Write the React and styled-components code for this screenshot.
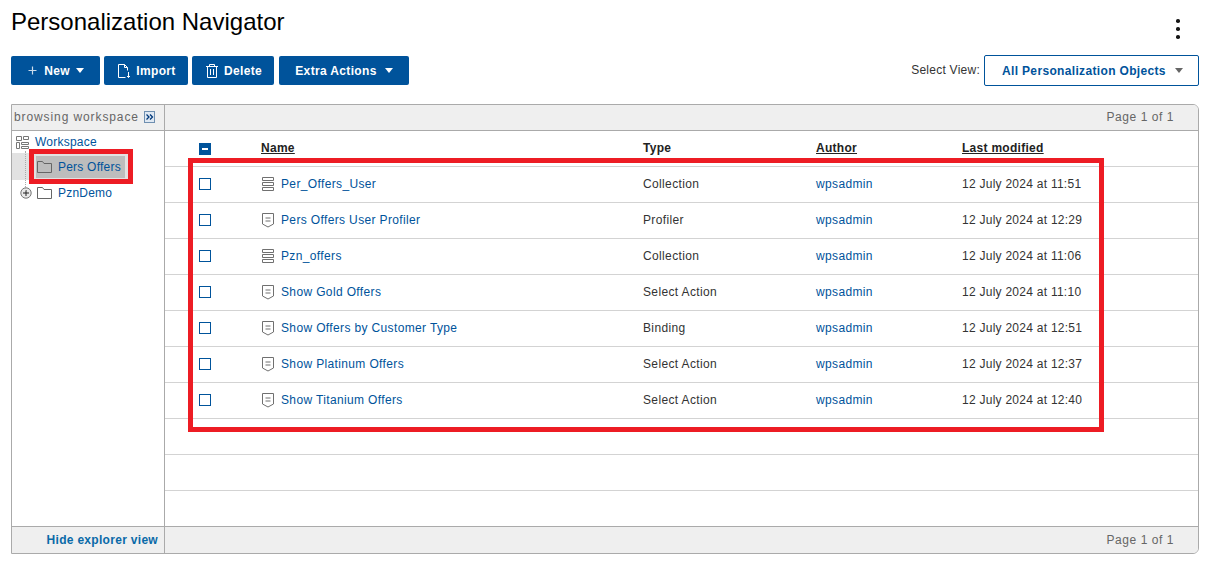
import React from "react";
import styled, { createGlobalStyle } from "styled-components";

const Global = createGlobalStyle`
  html, body { margin: 0; padding: 0; background: #fff; }
  body { font-family: "Liberation Sans", Arial, sans-serif; overflow: hidden; }
`

const Page = styled.div`
  position: relative;
  width: 1205px;
  height: 564px;
  box-sizing: border-box;
  padding: 0 6px 0 11px;
`

const TitleRow = styled.div`
  height: 56px;
  display: flex;
  justify-content: space-between;
`

const Title = styled.h1`
  margin: 7px 0 0;
  font-size: 24px;
  line-height: 29px;
  font-weight: 400;
  color: #000;
`

const Kebab = styled.div`
  margin: 19px 20px 0 0;
  width: 3px;
  display: flex;
  flex-direction: column;
  gap: 4.5px;
  >span{
    width: 3.5px;
    height: 3.5px;
    border-radius: 50%;
    background: #161616;
  }
`

const Toolbar = styled.div`
  height: 48px;
  display: flex;
  justify-content: space-between;
  align-items: flex-start;
`

const Buttons = styled.div`
  display: flex;
  gap: 4px;
`

const Button = styled.button`
  width: ${p => p.$w}px;
  height: 29px;
  margin-left: ${p => p.$ml || 0}px;
  padding: 0 0 0 ${p => p.$pl || 0}px;
  display: flex;
  align-items: center;
  justify-content: center;
  gap: ${p => p.$gap || 6}px;
  background: #00539b;
  color: #fff;
  border: none;
  border-radius: 2px;
  font: 700 12px "Liberation Sans", Arial, sans-serif;
  letter-spacing: 0.35px;
`

const Caret = styled.span`
  width: 0;
  height: 0;
  border-left: 4px solid transparent;
  border-right: 4px solid transparent;
  border-top: 5px solid ${p => p.$c || "#fff"};
`

const ViewPicker = styled.div`
  display: flex;
  align-items: center;
  gap: 4px;
  margin-top: -1px;
`

const ViewLabel = styled.span`
  font-size: 12px;
  letter-spacing: 0.25px;
  color: #333;
  margin-top: -2px;
`

const Select = styled.div`
  width: 215px;
  height: 31px;
  box-sizing: border-box;
  border: 1px solid #00539b;
  border-radius: 2px;
  padding: 0 15px 0 17px;
  display: flex;
  align-items: center;
  justify-content: space-between;
  font-size: 12px;
  font-weight: 700;
  letter-spacing: 0.34px;
  color: #00539b;
`

const Panel = styled.div`
  height: 450px;
  box-sizing: border-box;
  border: 1px solid #aaa;
  border-radius: 0 6px 6px 0;
  display: grid;
  grid-template-columns: 153px 1fr;
  grid-template-rows: 26px 1fr 27px;
  overflow: hidden;
`

const Bar = styled.div`
  background: #efefef;
  display: flex;
  align-items: center;
  font-size: 12px;
  letter-spacing: ${p => p.$left ? "0.9px" : "0.55px"};
  color: #666;
  border-right: ${p => p.$left ? "1px solid #aaa" : "none"};
  border-bottom: ${p => p.$top ? "1px solid #aaa" : "none"};
  border-top: ${p => p.$bottom ? "1px solid #aaa" : "none"};
  justify-content: ${p => p.$left ? "flex-start" : "flex-end"};
  padding: 0 ${p => p.$left ? "0" : "24px"} ${p => p.$top ? "2px" : "0"} ${p => p.$left ? "2px" : "0"};
`

const FootLink = styled.a`
  margin-left: auto;
  margin-right: 6px;
  font-weight: 700;
  letter-spacing: 0.3px;
  color: #0a6aa8;
`

const Tree = styled.div`
  border-right: 1px solid #aaa;
  position: relative;
`

const TreeRow = styled.div`
  height: ${p => p.$h}px;
  width: ${p => p.$w ? `${p.$w}px` : "auto"};
  box-sizing: border-box;
  display: flex;
  align-items: center;
  padding-left: ${p => p.$indent}px;
  gap: ${p => p.$gap || 6}px;
  background: ${p => p.$bg || "transparent"};
  font-size: 12px;
  letter-spacing: 0.22px;
  color: #00539b;
`

const TreeSelected = styled.span`
  display: flex;
  align-items: center;
  gap: 6px;
  width: 89px;
  height: 22px;
  padding-left: 1px;
  box-sizing: border-box;
  background: #bdbdbd;
`

const PznLabel = styled.span`
  margin-left: 1px;
`

const TreeGuide = styled.div`
  position: absolute;
  left: 13px;
  top: 20px;
  height: 40px;
  border-left: 1px dotted #aaa;
`

const Main = styled.div`
  display: flex;
  flex-direction: column;
`

const Row = styled.div`
  flex: none;
  height: 36px;
  box-sizing: border-box;
  border-bottom: 1px solid #d3d3d3;
  display: grid;
  grid-template-columns: 62px 382px 173px 146px 1fr;
  align-items: center;
  padding: 0 0 1px 34px;
  font-size: 12px;
  letter-spacing: 0.36px;
  color: #333;
`

const Check = styled.span`
  width: 12px;
  height: 12px;
  margin-top: ${p => p.$on ? 2 : 0}px;
  box-sizing: border-box;
  border: 1px solid #00539b;
  background: ${p => p.$on ? "#00539b" : "#fff"};
  display: flex;
  align-items: center;
  justify-content: center;
  >i{
    width: 6px;
    height: 2px;
    background: #fff;
  }
`

const HeadCell = styled.span`
  font-weight: 700;
  letter-spacing: 0.28px;
  text-decoration: underline;
  color: #222;
`

const HeadPlain = styled.span`
  font-weight: 700;
  letter-spacing: 0.28px;
  color: #222;
`

const NameCell = styled.span`
  display: flex;
  align-items: center;
  gap: 7px;
  color: #00539b;
`

const AuthorCell = styled.span`
  color: #00539b;
`

const DateCell = styled.span`
  letter-spacing: 0.26px;
`

const Annotation = styled.div`
  position: absolute;
  left: ${p => p.$x}px;
  top: ${p => p.$y}px;
  width: ${p => p.$w}px;
  height: ${p => p.$h}px;
  box-sizing: border-box;
  border: ${p => p.$b}px solid #ed1c24;
  pointer-events: none;
`

const CollapseIcon = () => (
  <svg width="11" height="12" viewBox="0 0 11 12" fill="none" style={{ marginLeft: 5 }}>
    <rect x=".5" y=".5" width="10" height="11" fill="#dfe8f2" stroke="#6f8fb0" />
    <path d="M2.5 3.5L5 6 2.5 8.5M6 3.5L8.5 6 6 8.5" stroke="#00387a" strokeWidth="1.3" />
  </svg>
)

const PlusIcon = () => (
  <svg width="11" height="11" viewBox="0 0 11 11" fill="none" stroke="#fff">
    <path d="M5.5 1.5v8M1.5 5.5h8" strokeWidth="1.2" opacity="0.8" />
  </svg>
)

const ImportIcon = () => (
  <svg width="14" height="16" viewBox="0 0 14 16" fill="none" stroke="#fff" strokeWidth="1">
    <path d="M1.5 1.5h6l3 3v3M7.5 1.5v3h3M1.5 1.5v13h7" />
    <path d="M11.5 9v5.5M10 13l1.5 1.5L13 13" />
  </svg>
)

const TrashIcon = () => (
  <svg width="12" height="14" viewBox="0 0 12 14" fill="none" stroke="#fff" strokeWidth="1">
    <path d="M0 2.5h12M3.5 2.5V.5h5v2M1.5 2.5v11h9v-11M4.5 5v6M7.5 5v6" />
  </svg>
)

const FolderIcon = () => (
  <svg width="15" height="12" viewBox="0 0 15 12" fill="none" stroke="#666">
    <path d="M.5 11.5V.5h5l1.5 2h7.5v9z" />
  </svg>
)

const WorkspaceIcon = () => (
  <svg width="13" height="13" viewBox="0 0 13 13" fill="none" stroke="#777">
    <path d="M.5.5h5v4h-5zM7.5.5h5v3h-5zM.5 6.5h3v6h-3zM5.5 6.5h7v2h-7zM5.5 10.5h7v2h-7z" />
  </svg>
)

const ExpandIcon = () => (
  <svg width="12" height="12" viewBox="0 0 12 12" fill="none">
    <circle cx="6" cy="6" r="5.2" fill="#e8e8e8" stroke="#777" />
    <path d="M3 6h6M6 3v6" stroke="#222" />
  </svg>
)

const CollectionIcon = () => (
  <svg width="13" height="14" viewBox="0 0 13 14" fill="none" stroke="#707070">
    <path d="M1.5.5h11v3h-11zM1.5 5.5h11v3h-11zM1.5 10.5h11v3h-11z" />
  </svg>
)

const RuleIcon = () => (
  <svg width="13" height="15" viewBox="0 0 13 15" fill="none" stroke="#707070">
    <path d="M1.5.5h11v10.5l-5.5 3-5.5-3z" />
    <path d="M4.5 5h5M4.5 8h5" />
  </svg>
)

const rows = [
  { name: "Per_Offers_User", type: "Collection", when: "12 July 2024 at 11:51" },
  { name: "Pers Offers User Profiler", type: "Profiler", when: "12 July 2024 at 12:29" },
  { name: "Pzn_offers", type: "Collection", when: "12 July 2024 at 11:06" },
  { name: "Show Gold Offers", type: "Select Action", when: "12 July 2024 at 11:10" },
  { name: "Show Offers by Customer Type", type: "Binding", when: "12 July 2024 at 12:51" },
  { name: "Show Platinum Offers", type: "Select Action", when: "12 July 2024 at 12:37" },
  { name: "Show Titanium Offers", type: "Select Action", when: "12 July 2024 at 12:40" },
]

export default function App() {
  return (
    <Page>
      <Global />
      <TitleRow>
        <Title>Personalization Navigator</Title>
        <Kebab><span /><span /><span /></Kebab>
      </TitleRow>
      <Toolbar>
        <Buttons>
          <Button $w={89}><PlusIcon />New<Caret /></Button>
          <Button $w={84} $gap={5} $pl={1}><ImportIcon />Import</Button>
          <Button $w={82} $pl={2}><TrashIcon />Delete</Button>
          <Button $w={130} $ml={1} $gap={8}>Extra Actions<Caret /></Button>
        </Buttons>
        <ViewPicker>
          <ViewLabel>Select View:</ViewLabel>
          <Select>All Personalization Objects<Caret $c="#666" /></Select>
        </ViewPicker>
      </Toolbar>
      <Panel>
        <Bar $left $top>browsing workspace<CollapseIcon /></Bar>
        <Bar $top>Page 1 of 1</Bar>
        <Tree>
          <TreeGuide />
          <TreeRow $h={22} $indent={4}><WorkspaceIcon />Workspace</TreeRow>
          <TreeRow $h={27} $w={116} $indent={24} $bg="#e2e2e2">
            <TreeSelected><FolderIcon />Pers Offers</TreeSelected>
          </TreeRow>
          <TreeRow $h={26} $indent={8} $gap={5}><ExpandIcon /><FolderIcon /><PznLabel>PznDemo</PznLabel></TreeRow>
        </Tree>
        <Main>
          <Row>
            <Check $on><i /></Check>
            <HeadCell>Name</HeadCell>
            <HeadPlain>Type</HeadPlain>
            <HeadCell>Author</HeadCell>
            <HeadCell>Last modified</HeadCell>
          </Row>
          {rows.map(r => (
            <Row key={r.name}>
              <Check />
              <NameCell>
                {r.type === "Collection" ? <CollectionIcon /> : <RuleIcon />}
                {r.name}
              </NameCell>
              <span>{r.type}</span>
              <AuthorCell>wpsadmin</AuthorCell>
              <DateCell>{r.when}</DateCell>
            </Row>
          ))}
          <Row />
          <Row />
        </Main>
        <Bar $left $bottom><FootLink>Hide explorer view</FootLink></Bar>
        <Bar $bottom>Page 1 of 1</Bar>
      </Panel>
      <Annotation $x={29} $y={149} $w={104} $h={35} $b={5} />
      <Annotation $x={188} $y={158} $w={916} $h={274} $b={5} />
    </Page>
  )
}
